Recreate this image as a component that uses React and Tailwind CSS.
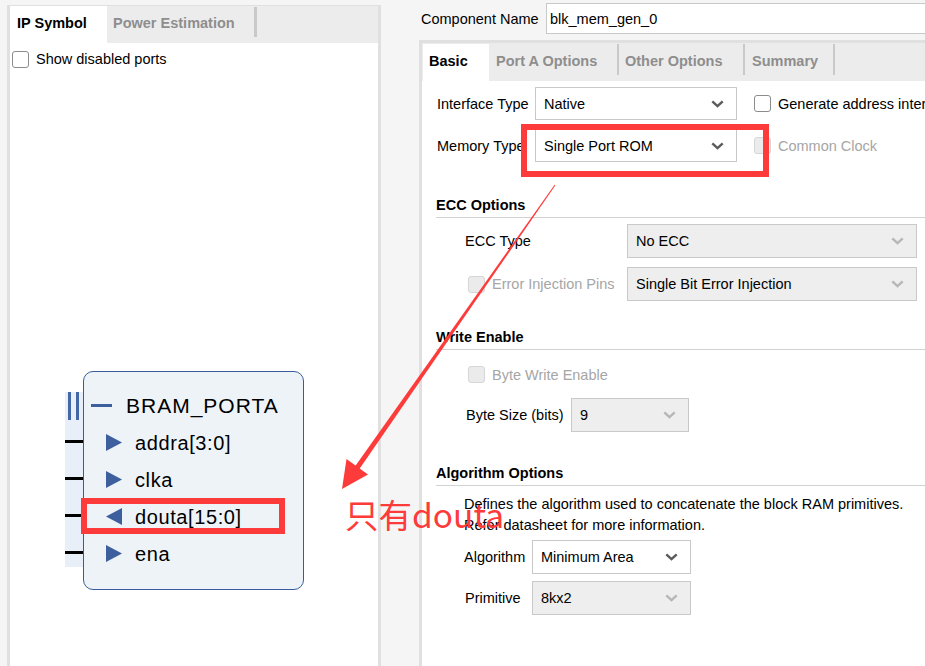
import React from 'react';

const Chevron = ({ light }) => (
  <svg width="13" height="8" viewBox="0 0 13 8">
    <path d="M1.3 1.3 L6.5 6.2 L11.7 1.3" fill="none" stroke={light ? '#b7b7b7' : '#5c5c5c'} strokeWidth="2.4" />
  </svg>
);

function Select({ className, value, disabled }) {
  return (
    <div className={`flex items-center justify-between border border-[#c9c9c9] pl-[8px] pr-[12px] shrink-0 ${disabled ? 'bg-[#eeeeee]' : 'bg-white'} ${className}`}>
      <span className="whitespace-nowrap">{value}</span>
      <Chevron light={disabled} />
    </div>
  );
}

function Checkbox({ disabled }) {
  return (
    <div className={`w-[17px] h-[17px] shrink-0 rounded-[3px] border ${disabled ? 'border-[#d6d6d6] bg-[#ebebeb]' : 'border-[#8c8c8c] bg-white'}`} />
  );
}

function Heading({ children, className }) {
  return (
    <div className={`ml-[14px] h-[23px] pb-[2px] border-b border-[#d2d2d2] font-bold leading-[20px] ${className}`}>{children}</div>
  );
}

function Port({ name, dir }) {
  return (
    <div className="h-[37px] flex items-center">
      <svg width="16" height="17" viewBox="0 0 16 17" className="ml-[22px] shrink-0">
        {dir === 'in' ? (
          <polygon points="0,0 16,8.5 0,17" fill="#3d5f9e" />
        ) : (
          <polygon points="16,0 0,8.5 16,17" fill="#3d5f9e" />
        )}
      </svg>
      <span className="ml-[13px] text-[20px] tracking-[0.6px] leading-[24px]">{name}</span>
    </div>
  );
}

export default function App() {
  return (
    <div className="relative w-[925px] h-[666px] overflow-hidden bg-[#f5f5f5] flex items-start font-['Liberation_Sans',Arial,sans-serif] text-[14.5px] leading-[20px] text-black">
      {/* Left panel */}
      <div className="mt-[5px] ml-[7px] w-[374px] h-[700px] shrink-0 bg-white border-l-[3px] border-r-[3px] border-t border-[#e0e0e0] flex flex-col">
        <div className="h-[37px] bg-[#ececec] flex items-stretch shrink-0">
          <div className="w-[97px] bg-white flex items-center pl-[7px] pb-[3px] font-bold">IP Symbol</div>
          <div className="w-[147px] flex items-center pl-[6px] pb-[3px] font-bold text-[#8e8e8e] whitespace-nowrap">Power Estimation</div>
          <div className="w-[3px] h-[30px] mt-[1px] bg-[#c9c9c9]" />
        </div>
        <div className="mt-[6px] ml-[2px] flex items-center gap-[7px]">
          <Checkbox />
          <span>Show disabled ports</span>
        </div>

        {/* IP symbol */}
        <div className="mt-[302px] ml-[55px] flex items-start">
          <div className="mt-[21px] w-[18px] h-[175px] bg-[#e8eff9] flex flex-col shrink-0">
            <div className="ml-[3px] flex gap-[5px] h-[28px]">
              <div className="w-[3px] h-[28px] bg-[#4468a6]" />
              <div className="w-[3px] h-[28px] bg-[#4468a6]" />
            </div>
            <div className="mt-[20px] flex flex-col gap-[34px]">
              <div className="w-[18px] h-[3px] bg-black" />
              <div className="w-[18px] h-[3px] bg-black" />
              <div className="w-[18px] h-[3px] bg-black" />
              <div className="w-[18px] h-[3px] bg-black" />
            </div>
          </div>
          <div className="w-[221px] h-[219px] shrink-0 rounded-[10px] border border-[#3a5b9b] bg-[#eef3f8] pt-[15px]">
            <div className="h-[37px] flex items-center">
              <div className="ml-[7px] w-[21px] h-[3px] bg-[#3d5f9e]" />
              <span className="ml-[14px] text-[21px] tracking-[1px] leading-[24px]">BRAM_PORTA</span>
            </div>
            <Port name="addra[3:0]" dir="in" />
            <Port name="clka" dir="in" />
            <Port name="douta[15:0]" dir="out" />
            <Port name="ena" dir="in" />
          </div>
        </div>
      </div>

      {/* Right column */}
      <div className="ml-[38px] w-[560px] shrink-0 flex flex-col">
        <div className="mt-[3px] flex items-center pl-[2px]">
          <span className="w-[125px] shrink-0 whitespace-nowrap">Component Name</span>
          <div className="h-[31px] w-[420px] border border-[#c9c9c9] bg-white pl-[3px] flex items-center">blk_mem_gen_0</div>
        </div>

        <div className="mt-[6px] h-[700px] bg-white border-l-[3px] border-t-[3px] border-[#e0e0e0] flex flex-col">
          <div className="h-[38px] bg-[#ececec] flex items-stretch shrink-0 font-bold text-[#8e8e8e] whitespace-nowrap">
            <div className="ml-[1px] mt-[1px] w-[66px] bg-white flex items-center pl-[6px] pb-[3px] text-black">Basic</div>
            <div className="w-[128px] flex items-center pl-[7px] pb-[2px]">Port A Options</div>
            <div className="w-[2px] h-[31px] mt-[1px] bg-[#c9c9c9]" />
            <div className="w-[124px] flex items-center pl-[6px] pb-[2px]">Other Options</div>
            <div className="w-[2px] h-[31px] mt-[1px] bg-[#c9c9c9]" />
            <div className="w-[88px] flex items-center pl-[7px] pb-[2px]">Summary</div>
            <div className="w-[2px] h-[31px] mt-[1px] bg-[#c9c9c9]" />
          </div>

          {/* Interface / Memory */}
          <div className="mt-[6px] flex items-center pl-[15px] h-[33px] whitespace-nowrap">
            <span className="w-[98px] shrink-0">Interface Type</span>
            <Select className="w-[202px] h-[33px]" value="Native" />
            <div className="ml-[17px] flex items-center gap-[7px]">
              <Checkbox />
              <span>Generate address interface with 32 bits</span>
            </div>
          </div>
          <div className="mt-[9px] flex items-center pl-[15px] h-[33px] whitespace-nowrap">
            <span className="w-[98px] shrink-0">Memory Type</span>
            <Select className="w-[202px] h-[33px]" value="Single Port ROM" />
            <div className="ml-[17px] flex items-center gap-[7px]">
              <Checkbox disabled />
              <span className="text-[#a6a6a6]">Common Clock</span>
            </div>
          </div>

          {/* ECC */}
          <Heading className="mt-[33px]">ECC Options</Heading>
          <div className="mt-[6px] flex items-center pl-[43px] h-[34px]">
            <span className="w-[162px] shrink-0">ECC Type</span>
            <Select className="w-[290px] h-[34px]" value="No ECC" disabled />
          </div>
          <div className="mt-[9px] flex items-center pl-[43px] h-[34px]">
            <div className="w-[162px] shrink-0 flex items-center gap-[7px] pl-[3px]">
              <Checkbox disabled />
              <span className="text-[#a6a6a6] whitespace-nowrap">Error Injection Pins</span>
            </div>
            <Select className="w-[290px] h-[34px]" value="Single Bit Error Injection" disabled />
          </div>

          {/* Write Enable */}
          <Heading className="mt-[26px]">Write Enable</Heading>
          <div className="mt-[16px] flex items-center pl-[46px] h-[17px] gap-[7px]">
            <Checkbox disabled />
            <span className="text-[#a6a6a6]">Byte Write Enable</span>
          </div>
          <div className="mt-[15px] flex items-center pl-[44px] h-[34px]">
            <span className="w-[105px] shrink-0 whitespace-nowrap">Byte Size (bits)</span>
            <Select className="w-[118px] h-[34px]" value="9" disabled />
          </div>

          {/* Algorithm */}
          <Heading className="mt-[31px]">Algorithm Options</Heading>
          <div className="mt-[8px] pl-[42px] leading-[21px] whitespace-nowrap">
            <div>Defines the algorithm used to concatenate the block RAM primitives.</div>
            <div>Refer datasheet for more information.</div>
          </div>
          <div className="mt-[4px] flex items-center pl-[42px] h-[34px]">
            <span className="w-[68px] shrink-0">Algorithm</span>
            <Select className="w-[159px] h-[34px]" value="Minimum Area" />
          </div>
          <div className="mt-[7px] flex items-center pl-[43px] h-[34px]">
            <span className="w-[67px] shrink-0">Primitive</span>
            <Select className="w-[159px] h-[34px]" value="8kx2" disabled />
          </div>
        </div>
      </div>

      {/* Annotations */}
      <div className="absolute left-[521px] top-[124px] w-[248px] h-[53px] border-[6px] border-[#fd3b3b]" />
      <div className="absolute left-[81px] top-[498px] w-[204px] h-[36px] border-[6px] border-[#fd3b3b]" />
      <svg className="absolute left-0 top-0 pointer-events-none" width="925" height="666" viewBox="0 0 925 666">
        <polygon points="555.4,185.3 554.6,184.7 350,473.6 354.2,476.6" fill="#fd3b3b" />
        <polygon points="342,489 346.5,459 368,474.5" fill="#fd3b3b" />
      </svg>
      <div className="absolute left-[345px] top-[496px] text-[33.5px] leading-[36px] text-[#fd3b3b] font-['Noto_Sans_CJK_SC','Noto_Sans',sans-serif] whitespace-nowrap">只有douta</div>
    </div>
  );
}
